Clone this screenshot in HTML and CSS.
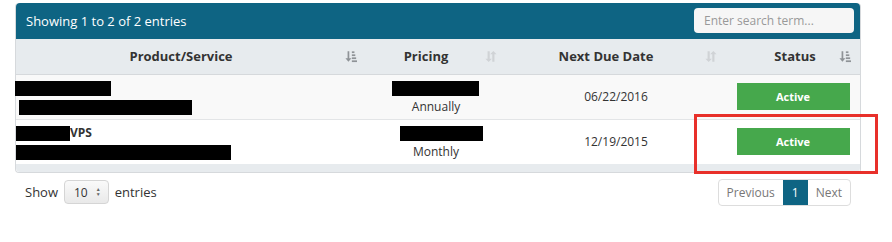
FILE: index.html
```html
<!DOCTYPE html>
<html lang="en">
<head>
    <meta charset="UTF-8">
    <title>My Products &amp; Services</title>
    <link rel="stylesheet" href="styles.css">
</head>
<body>

<div class="page-wrap">
<div class="table-wrap">
    <!-- Barra superior con contador y buscador -->
    <div class="table-top">
        <span class="table-info">Showing 1 to 2 of 2 entries</span>
        <input class="search" type="text" placeholder="Enter search term...">
    </div>

    <table class="products">
        <thead>
            <tr>
                <th class="col-product">Product/Service
                    <svg class="sort sort-active" viewBox="0 0 14 14"><path d="M3 1h2v8h2.5L4 13 0.5 9H3z"/><rect x="8" y="1" width="3" height="2"/><rect x="8" y="4.5" width="4" height="2"/><rect x="8" y="8" width="5" height="2"/><rect x="8" y="11.5" width="6" height="2"/></svg>
                </th>
                <th class="col-pricing">Pricing
                    <svg class="sort" viewBox="0 0 14 14"><path d="M3 1h2.5v8.5H8L4.25 13.5 0.5 9.5H3z"/><path d="M8.5 13h2.5V4.5h2.5L9.75 0.5 6 4.5h2.5z"/></svg>
                </th>
                <th class="col-due">Next Due Date
                    <svg class="sort" viewBox="0 0 14 14"><path d="M3 1h2.5v8.5H8L4.25 13.5 0.5 9.5H3z"/><path d="M8.5 13h2.5V4.5h2.5L9.75 0.5 6 4.5h2.5z"/></svg>
                </th>
                <th class="col-status">Status
                    <svg class="sort sort-active" viewBox="0 0 14 14"><path d="M3 1h2v8h2.5L4 13 0.5 9H3z"/><rect x="8" y="1" width="3" height="2"/><rect x="8" y="4.5" width="4" height="2"/><rect x="8" y="8" width="5" height="2"/><rect x="8" y="11.5" width="6" height="2"/></svg>
                </th>
            </tr>
        </thead>
        <tbody>
            <tr class="odd">
                <td class="product">
                    <span class="redact r1"></span><br>
                    <span class="redact r2"></span>
                </td>
                <td class="center">
                    <span class="redact r3"></span><br>
                    Annually
                </td>
                <td class="center">06/22/2016</td>
                <td class="center"><span class="label-active">Active</span></td>
            </tr>
            <tr>
                <td class="product">
                    <span class="redact r4"></span><strong>VPS</strong><br>
                    <span class="redact r5"></span>
                </td>
                <td class="center">
                    <span class="redact r6"></span><br>
                    Monthly
                </td>
                <td class="center">12/19/2015</td>
                <td class="center"><span class="label-active">Active</span></td>
            </tr>
        </tbody>
    </table>
    <div class="table-bottom"></div>
</div>
<!-- Recuadro rojo de resaltado -->
<div class="highlight"></div>
</div>

<!-- Pie: selector y paginación -->
<div class="table-footer">
    <div class="length">
        Show
        <span class="select">10 <span class="arrows">&#9650;<br>&#9660;</span></span>
        entries
    </div>
    <div class="pager">
        <span class="page">Previous</span>
        <span class="page current">1</span>
        <span class="page">Next</span>
    </div>
</div>

</body>
</html>
```

FILE: styles.css
```css
/* Estilo global */
body {
    margin: 0;
    padding: 3px 31px 0 15px;
    font-family: 'Open Sans', 'Liberation Sans', sans-serif;
    font-size: 12px;
    color: #333;
    background-color: #fff;
}

.page-wrap {
    position: relative;
}

/* Contenedor de la tabla */
.table-wrap {
    border: 1px solid #d6d9dc;
    border-top: none;
    border-radius: 4px;
}

.table-top {
    height: 36px;
    background-color: #0e6483;
    border-radius: 4px 4px 0 0;
    display: flex;
    justify-content: space-between;
    align-items: center;
    padding: 0 6px 0 10px;
}

.table-info {
    color: #fff;
    font-size: 13px;
}

.search {
    width: 160px;
    height: 25px;
    box-sizing: border-box;
    border: none;
    border-radius: 4px;
    background-color: #f6f6f6;
    padding: 0 10px;
    font-family: inherit;
    font-size: 12px;
    color: #555;
    margin-top: -2px;
}

.search::placeholder {
    color: #999;
}

/* Tabla */
.products {
    width: 100%;
    border-collapse: collapse;
    table-layout: fixed;
}

.products th {
    position: relative;
    box-sizing: border-box;
    height: 35px;
    padding: 0 28px 0 8px;
    background-color: #e7ebee;
    border-bottom: 1px solid #d6d9dc;
    font-size: 13px;
    font-weight: bold;
    color: #333;
    text-align: center;
}

.col-product { width: 350px; }
.col-pricing { width: 140px; }
.col-due { width: 220px; }
.products th.col-status { padding: 0 24px 0 28px; }

.sort {
    position: absolute;
    right: 9px;
    top: 11px;
    width: 12px;
    height: 13px;
    fill: #d0d3d6;
}

.sort-active {
    fill: #8f9397;
}

.products td {
    height: 44px;
    padding: 0;
    border-bottom: 1px solid #e3e5e7;
    font-size: 12px;
    line-height: 19px;
    vertical-align: middle;
}

.products tr.odd td {
    background-color: #f9f9f9;
}

.products tr:last-child td {
    border-bottom: none;
}

.center {
    text-align: center;
}

.product {
    text-align: left;
}

.product strong {
    font-size: 12px;
}

/* Cajas negras de texto oculto */
.redact {
    display: inline-block;
    background-color: #000;
    height: 15px;
    vertical-align: middle;
}

.r1 { width: 96px; margin-left: -1px; }
.r2 { width: 173px; margin-left: 3px; }
.r3 { width: 87px; margin-left: -2px; }
.r4 { width: 54px; }
.r5 { width: 215px; }
.r6 { width: 83px; margin-left: 10px; }

.label-active {
    display: inline-block;
    width: 113px;
    height: 27px;
    line-height: 27px;
    background-color: #46a84c;
    color: #fff;
    font-size: 11px;
    font-weight: bold;
}

.highlight {
    position: absolute;
    right: -17px;
    width: 184px;
    bottom: -1px;
    height: 60px;
    box-sizing: border-box;
    border: 3px solid #e8302a;
    pointer-events: none;
}

.table-bottom {
    height: 8px;
    background-color: #e7ebee;
    border-radius: 0 0 4px 4px;
}

/* Pie */
.table-footer {
    display: flex;
    justify-content: space-between;
    align-items: center;
    margin-top: 6px;
    padding: 0 10px;
}

.length {
    display: flex;
    align-items: center;
    gap: 6px;
    font-size: 13px;
}

.select {
    display: inline-flex;
    align-items: center;
    gap: 8px;
    height: 24px;
    box-sizing: border-box;
    padding: 0 7px 0 9px;
    border: 1px solid #d5d5d5;
    border-radius: 4px;
    background: linear-gradient(#fafafa, #e9e9e9);
    font-size: 12px;
}

.arrows {
    font-size: 5px;
    line-height: 5px;
    color: #666;
}

.pager {
    display: flex;
    border: 1px solid #ddd;
    border-radius: 4px;
    overflow: hidden;
}

.page {
    padding: 0 8px;
    height: 25px;
    line-height: 25px;
    color: #777;
    font-size: 12px;
}

.page.current {
    background-color: #0e6483;
    color: #fff;
    padding: 0 9px;
}
```
